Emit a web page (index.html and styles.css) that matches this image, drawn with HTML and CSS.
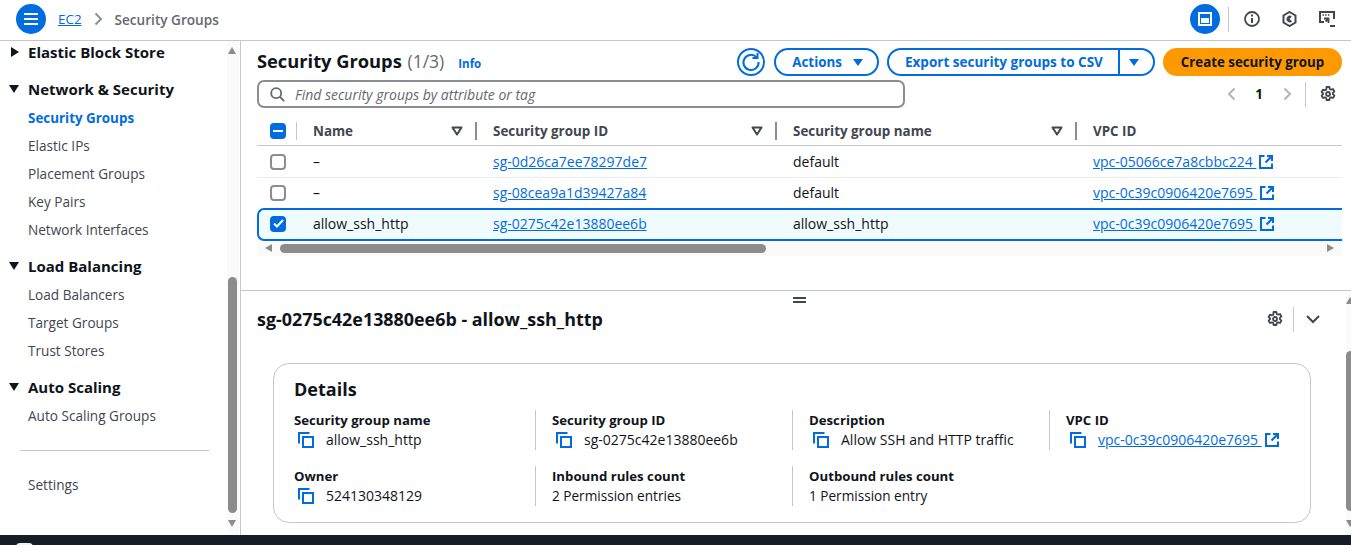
FILE: index.html
```html
<!DOCTYPE html>
<html lang="en">
<head>
    <meta charset="UTF-8">
    <title>Security Groups | EC2</title>
    <link rel="stylesheet" href="styles.css">
</head>
<body>
    <svg class="icon-defs" width="0" height="0">
        <defs>
            <symbol id="copy" viewBox="0 0 16 16">
                <path d="M1 11.5V1h10.5" fill="none" stroke="currentColor" stroke-width="2"/>
                <rect x="5" y="5" width="10" height="10" fill="none" stroke="currentColor" stroke-width="2"/>
            </symbol>
            <symbol id="external" viewBox="0 0 14 14">
                <path d="M5.5 1H1v12h12V8.5" fill="none" stroke="currentColor" stroke-width="2"/>
                <path d="M8 1h5v5M13 1L6.5 7.5" fill="none" stroke="currentColor" stroke-width="2.2"/>
            </symbol>
            <symbol id="gear" viewBox="0 0 16 16">
                <path d="M6.6 1h2.8l.4 2 1.3.7 1.9-.7 1.4 2.4-1.5 1.4v1.4l1.5 1.4-1.4 2.4-1.9-.7-1.3.7-.4 2H6.6l-.4-2-1.3-.7-1.9.7-1.4-2.4 1.5-1.4V7.4L1.6 6l1.4-2.4 1.9.7 1.3-.7z" fill="none" stroke="currentColor" stroke-width="1.8" stroke-linejoin="round"/>
                <circle cx="8" cy="8" r="2" fill="none" stroke="currentColor" stroke-width="1.8"/>
            </symbol>
            <symbol id="sort" viewBox="0 0 12 10">
                <path d="M1.5 1.5h9L6 8.5z" fill="none" stroke="currentColor" stroke-width="2" stroke-linejoin="round"/>
            </symbol>
        </defs>
    </svg>

    <header class="topbar">
        <button class="menu-btn" aria-label="Open navigation">
            <svg width="14" height="12" viewBox="0 0 14 12"><path d="M0 1h14M0 6h14M0 11h14" stroke="#fff" stroke-width="2"/></svg>
        </button>
        <a class="crumb-link" href="#">EC2</a>
        <svg class="crumb-sep" width="9" height="14" viewBox="0 0 9 14"><path d="M1.5 1.5L7 7l-5.5 5.5" fill="none" stroke="#879596" stroke-width="2"/></svg>
        <span class="crumb-current">Security Groups</span>
        <div class="topbar-tools">
            <button class="panel-btn" aria-label="Toggle panel">
                <svg width="14" height="14" viewBox="0 0 14 14"><rect x="1" y="1" width="12" height="12" fill="none" stroke="#fff" stroke-width="2"/><rect x="3" y="6" width="8" height="5" fill="#fff"/></svg>
            </button>
            <span class="tools-sep"></span>
            <svg class="tool" width="16" height="16" viewBox="0 0 16 16"><circle cx="8" cy="8" r="7" fill="none" stroke="#424650" stroke-width="1.8"/><path d="M8 7v5" stroke="#424650" stroke-width="2"/><path d="M8 3.5v2" stroke="#424650" stroke-width="2"/></svg>
            <svg class="tool" width="15" height="16" viewBox="0 0 15 16"><path d="M7.5 1l6 3.5v7l-6 3.5-6-3.5v-7z" fill="none" stroke="#424650" stroke-width="2"/><path d="M10.2 10.4A3.3 3.3 0 1 1 9.8 5.4L7.5 8z" fill="#424650"/></svg>
            <svg class="tool" width="16" height="16" viewBox="0 0 16 16"><path d="M5 11H1V1h14v7" fill="none" stroke="#424650" stroke-width="2"/><path d="M3.5 4h1.5M6.2 4h1.5M8.9 4h1.5" stroke="#424650" stroke-width="1.5"/><path d="M5 7.5h4.5V12M9.5 7.5L6.5 10.5" fill="none" stroke="#424650" stroke-width="1.8"/><path d="M11 15h5" stroke="#424650" stroke-width="2"/></svg>
        </div>
    </header>

    <div class="layout">
        <nav class="sidebar">
            <div class="nav-head nav-first"><span class="caret caret-right"></span>Elastic Block Store</div>
            <div class="nav-head"><span class="caret caret-down"></span>Network &amp; Security</div>
            <a class="nav-item active" href="#">Security Groups</a>
            <a class="nav-item" href="#">Elastic IPs</a>
            <a class="nav-item" href="#">Placement Groups</a>
            <a class="nav-item" href="#">Key Pairs</a>
            <a class="nav-item" href="#">Network Interfaces</a>
            <div class="nav-head"><span class="caret caret-down"></span>Load Balancing</div>
            <a class="nav-item" href="#">Load Balancers</a>
            <a class="nav-item" href="#">Target Groups</a>
            <a class="nav-item" href="#">Trust Stores</a>
            <div class="nav-head"><span class="caret caret-down"></span>Auto Scaling</div>
            <a class="nav-item" href="#">Auto Scaling Groups</a>
            <hr class="nav-divider">
            <a class="nav-item" href="#">Settings</a>
            <div class="scrollbar">
                <span class="arrow-up"></span>
                <span class="thumb nav-thumb"></span>
                <span class="arrow-down"></span>
            </div>
        </nav>

        <main class="content">
            <section class="list-pane">
                <div class="list-head">
                    <h1 class="page-title">Security Groups <span class="count">(1/3)</span></h1>
                    <a class="info" href="#">Info</a>
                    <div class="actions">
                        <button class="refresh" aria-label="Refresh">
                            <svg width="20" height="20" viewBox="0 0 20 20"><path d="M15.5 5.2A7.6 7.6 0 1 0 17.6 10" fill="none" stroke="#006ce0" stroke-width="2"/><path d="M11.5 6h5V1" fill="none" stroke="#006ce0" stroke-width="2"/></svg>
                        </button>
                        <button class="btn actions-btn">Actions <span class="tri"></span></button>
                        <div class="split">
                            <button class="btn split-main">Export security groups to CSV</button>
                            <button class="btn split-drop" aria-label="More"><span class="tri"></span></button>
                        </div>
                        <button class="btn btn-primary">Create security group</button>
                    </div>
                </div>

                <div class="filter-row">
                    <label class="search">
                        <svg width="15" height="15" viewBox="0 0 15 15"><circle cx="6.2" cy="6.2" r="5" fill="none" stroke="#656871" stroke-width="1.8"/><path d="M10 10l4.2 4.2" stroke="#656871" stroke-width="1.8"/></svg>
                        <input type="text" placeholder="Find security groups by attribute or tag">
                    </label>
                    <div class="pager">
                        <svg width="9" height="14" viewBox="0 0 9 14"><path d="M7.5 1.5L2 7l5.5 5.5" fill="none" stroke="#b4b4bb" stroke-width="2"/></svg>
                        <span class="page-num">1</span>
                        <svg width="9" height="14" viewBox="0 0 9 14"><path d="M1.5 1.5L7 7l-5.5 5.5" fill="none" stroke="#b4b4bb" stroke-width="2"/></svg>
                        <span class="pager-sep"></span>
                        <svg class="gear" width="16" height="16"><use href="#gear"/></svg>
                    </div>
                </div>

                <div class="table">
                    <div class="row row-head">
                        <div class="cell cell-check"><span class="check check-on"><svg width="10" height="2" viewBox="0 0 10 2"><path d="M0 1h10" stroke="#fff" stroke-width="2"/></svg></span><span class="col-sep sep-light"></span></div>
                        <div class="cell cell-name">Name<svg class="sort" width="12" height="10"><use href="#sort"/></svg><span class="col-sep"></span></div>
                        <div class="cell cell-id">Security group ID<svg class="sort" width="12" height="10"><use href="#sort"/></svg><span class="col-sep"></span></div>
                        <div class="cell cell-group">Security group name<svg class="sort" width="12" height="10"><use href="#sort"/></svg><span class="col-sep"></span></div>
                        <div class="cell cell-vpc">VPC ID</div>
                    </div>
                    <div class="row row-first">
                        <div class="cell cell-check"><span class="check"></span></div>
                        <div class="cell cell-name">–</div>
                        <div class="cell cell-id"><a href="#">sg-0d26ca7ee78297de7</a></div>
                        <div class="cell cell-group">default</div>
                        <div class="cell cell-vpc"><a href="#">vpc-05066ce7a8cbbc224&nbsp;</a><svg class="ext" width="14" height="14"><use href="#external"/></svg></div>
                    </div>
                    <div class="row row-last">
                        <div class="cell cell-check"><span class="check"></span></div>
                        <div class="cell cell-name">–</div>
                        <div class="cell cell-id"><a href="#">sg-08cea9a1d39427a84</a></div>
                        <div class="cell cell-group">default</div>
                        <div class="cell cell-vpc"><a href="#">vpc-0c39c0906420e7695&nbsp;</a><svg class="ext" width="14" height="14"><use href="#external"/></svg></div>
                    </div>
                    <div class="row row-selected">
                        <div class="cell cell-check"><span class="check check-on"><svg width="11" height="9" viewBox="0 0 11 9"><path d="M1 4.5L4 7.5 10 1" fill="none" stroke="#fff" stroke-width="2"/></svg></span></div>
                        <div class="cell cell-name">allow_ssh_http</div>
                        <div class="cell cell-id"><a href="#">sg-0275c42e13880ee6b</a></div>
                        <div class="cell cell-group">allow_ssh_http</div>
                        <div class="cell cell-vpc"><a href="#">vpc-0c39c0906420e7695&nbsp;</a><svg class="ext" width="14" height="14"><use href="#external"/></svg></div>
                    </div>
                    <div class="hscroll">
                        <span class="arrow-left"></span>
                        <span class="thumb hscroll-thumb"></span>
                        <span class="arrow-right"></span>
                    </div>
                </div>
            </section>

            <section class="detail-pane">
                <span class="drag-handle"></span>
                <div class="detail-head">
                    <h2 class="detail-title">sg-0275c42e13880ee6b - allow_ssh_http</h2>
                    <div class="detail-tools">
                        <svg class="gear" width="16" height="16"><use href="#gear"/></svg>
                        <span class="pager-sep"></span>
                        <svg class="chevron" width="14" height="9" viewBox="0 0 14 9"><path d="M1 1l6 6 6-6" fill="none" stroke="#424650" stroke-width="2"/></svg>
                    </div>
                </div>
                <div class="card">
                    <h3 class="card-title">Details</h3>
                    <div class="fields">
                        <div class="field field-one">
                            <div class="field-label">Security group name</div>
                            <div class="field-value"><svg class="copy" width="16" height="16"><use href="#copy"/></svg>allow_ssh_http</div>
                        </div>
                        <div class="field">
                            <div class="field-label">Security group ID</div>
                            <div class="field-value"><svg class="copy" width="16" height="16"><use href="#copy"/></svg>sg-0275c42e13880ee6b</div>
                        </div>
                        <div class="field">
                            <div class="field-label">Description</div>
                            <div class="field-value"><svg class="copy" width="16" height="16"><use href="#copy"/></svg>Allow SSH and HTTP traffic</div>
                        </div>
                        <div class="field">
                            <div class="field-label">VPC ID</div>
                            <div class="field-value"><svg class="copy" width="16" height="16"><use href="#copy"/></svg><a href="#">vpc-0c39c0906420e7695&nbsp;</a><svg class="ext" width="14" height="14"><use href="#external"/></svg></div>
                        </div>
                        <div class="field field-one">
                            <div class="field-label">Owner</div>
                            <div class="field-value"><svg class="copy" width="16" height="16"><use href="#copy"/></svg>524130348129</div>
                        </div>
                        <div class="field">
                            <div class="field-label">Inbound rules count</div>
                            <div class="field-value field-small">2 Permission entries</div>
                        </div>
                        <div class="field">
                            <div class="field-label">Outbound rules count</div>
                            <div class="field-value field-small">1 Permission entry</div>
                        </div>
                    </div>
                </div>
                <div class="scrollbar scrollbar-detail">
                    <span class="arrow-up"></span>
                    <span class="thumb detail-thumb"></span>
                    <span class="arrow-down"></span>
                </div>
            </section>
        </main>
    </div>

    <footer class="taskbar"><span class="taskbar-item"></span></footer>
</body>
</html>
```

FILE: styles.css
```css
* {
    box-sizing: border-box;
}

html, body {
    margin: 0;
    height: 100%;
}

body {
    font-family: "Open Sans", "Noto Sans", sans-serif;
    font-size: 14px;
    color: #0f141a;
    background: #fff;
    display: flex;
    flex-direction: column;
    overflow: hidden;
}

a {
    color: #006ce0;
}

button {
    font-family: inherit;
    cursor: pointer;
}

.icon-defs {
    position: absolute;
}

/* top bar */
.topbar {
    height: 41px;
    flex: none;
    display: flex;
    align-items: center;
    padding: 0 16px 2px 16px;
    border-bottom: 1px solid #c6c6cd;
}

.menu-btn {
    width: 30px;
    height: 30px;
    border: none;
    border-radius: 50%;
    background: #006ce0;
    display: flex;
    align-items: center;
    justify-content: center;
    padding: 0;
}

.crumb-link {
    margin-left: 12px;
    font-size: 13.4px;
    text-decoration: underline;
}

.crumb-sep {
    margin: 0 12px 0 12px;
}

.crumb-current {
    font-size: 13.6px;
    font-weight: 600;
    color: #656871;
}

.topbar-tools {
    margin-left: auto;
    display: flex;
    align-items: center;
}

.panel-btn {
    width: 30px;
    height: 30px;
    border: none;
    border-radius: 50%;
    background: #006ce0;
    display: flex;
    align-items: center;
    justify-content: center;
    padding: 0;
}

.tools-sep {
    width: 1px;
    height: 25px;
    background: #c6c6cd;
    margin: 0 15px 0 8px;
}

.tool {
    margin-right: 22px;
}

.tool:last-child {
    margin-right: 0;
}

.layout {
    flex: 1;
    min-height: 0;
    display: flex;
}

/* side nav */
.sidebar {
    width: 241px;
    flex: none;
    position: relative;
    border-right: 1px solid #c6c6cd;
    padding: 0 0 0 28px;
    overflow: hidden;
}

.nav-head {
    position: relative;
    height: 20px;
    line-height: 20px;
    margin: 12px 0 5px;
    font-size: 15px;
    font-weight: 700;
    color: #0f141a;
}

.nav-first {
    margin: 1px 0 17px;
}

.caret {
    position: absolute;
    left: -18px;
    top: 5px;
    width: 0;
    height: 0;
}

.caret-right {
    left: -17px;
    border-top: 5px solid transparent;
    border-bottom: 5px solid transparent;
    border-left: 8px solid #0f141a;
}

.caret-down {
    left: -19px;
    top: 6px;
    border-left: 5.5px solid transparent;
    border-right: 5.5px solid transparent;
    border-top: 8px solid #0f141a;
}

.nav-item {
    display: block;
    height: 28px;
    line-height: 28px;
    color: #424650;
    text-decoration: none;
    font-size: 13.6px;
}

.nav-item.active {
    color: #006ce0;
    font-weight: 700;
    font-size: 13.4px;
}

.nav-divider {
    width: 189px;
    margin: 20px 0 20px -8px;
    border: none;
    border-top: 1px solid #c6c6cd;
}

.scrollbar {
    position: absolute;
    right: 1px;
    top: 0;
    bottom: 0;
    width: 12px;
    background: #fafafa;
}

.thumb {
    position: absolute;
    background: #8c8c8c;
    border-radius: 5px;
}

.nav-thumb {
    left: 1px;
    width: 9px;
    top: 236px;
    height: 236px;
}

.arrow-up, .arrow-down {
    position: absolute;
    left: 1px;
    width: 0;
    height: 0;
    border-left: 4.5px solid transparent;
    border-right: 4.5px solid transparent;
}

.arrow-up {
    top: 6px;
    border-bottom: 7px solid #8c8c8c;
}

.arrow-down {
    bottom: 8px;
    border-top: 7px solid #8c8c8c;
}

/* main area */
.content {
    flex: 1;
    min-width: 0;
    display: flex;
    flex-direction: column;
}

.list-pane {
    height: 250px;
    flex: none;
    padding: 0 9px 0 16px;
    border-bottom: 1px solid #c6c6cd;
}

.list-head {
    height: 39px;
    display: flex;
    align-items: center;
    padding-top: 3px;
}

.page-title {
    margin: -4px 0 0;
    font-size: 18.3px;
    font-weight: 700;
    color: #0f141a;
}

.count {
    margin-left: 1px;
    font-size: 17.5px;
    font-weight: 400;
    color: #656871;
}

.info {
    margin-left: 14px;
    margin-top: 2px;
    font-size: 11.5px;
    font-weight: 700;
    text-decoration: none;
}

.actions {
    margin-left: auto;
    display: flex;
    align-items: center;
}

.btn {
    height: 28px;
    border: 2px solid #006ce0;
    border-radius: 14px;
    background: #fff;
    color: #006ce0;
    font-size: 13.4px;
    font-weight: 700;
    padding: 0 16px;
    display: flex;
    align-items: center;
}

.refresh {
    width: 28px;
    height: 28px;
    margin-right: 9px;
    border: 2px solid #006ce0;
    border-radius: 50%;
    background: #fff;
    padding: 0;
    display: flex;
    align-items: center;
    justify-content: center;
}

.actions-btn {
    padding: 0 14px 0 16px;
}

.tri {
    display: inline-block;
    width: 0;
    height: 0;
    margin-left: 11px;
    border-left: 5.5px solid transparent;
    border-right: 5.5px solid transparent;
    border-top: 7px solid #006ce0;
}

.split {
    display: flex;
    margin: 0 8px;
}

.split-main {
    width: 233px;
    font-size: 13.5px;
    border-radius: 14px 0 0 14px;
    white-space: nowrap;
}

.split-drop {
    border-left: none;
    border-radius: 0 14px 14px 0;
    padding: 0 0 0 9px;
    width: 35px;
}

.split-drop .tri {
    margin-left: 0;
}

.btn-primary {
    width: 179px;
    justify-content: center;
    font-size: 13.3px;
    background: #ff9900;
    border-color: #ff9900;
    color: #0f141a;
    padding: 0;
}

.filter-row {
    height: 28px;
    display: flex;
    align-items: center;
}

.search {
    width: 648px;
    height: 28px;
    display: flex;
    align-items: center;
    gap: 10px;
    padding: 0 11px;
    border: 2px solid #8c8c94;
    border-radius: 7px;
}

.search input {
    flex: 1;
    border: none;
    outline: none;
    padding: 0;
    font: italic 14px "Open Sans", sans-serif;
    color: #0f141a;
}

.search input::placeholder {
    color: #656871;
    opacity: 1;
}

.pager {
    margin-left: auto;
    display: flex;
    align-items: center;
    margin-right: 6px;
}

.page-num {
    margin: 0 20px 0 19px;
    font-size: 13.4px;
    font-weight: 700;
}

.pager .pager-sep {
    margin: 0 14px 0 13px;
}

.pager-sep {
    width: 1px;
    height: 25px;
    background: #c6c6cd;
}

.gear {
    color: #424650;
    display: block;
}

/* table */
.table {
    position: relative;
    margin-top: 9px;
}

.row {
    display: flex;
    height: 31px;
    border-bottom: 1px solid #e9ebed;
}

.row-head {
    height: 29px;
    border-bottom: 1px solid #c6c6cd;
    font-size: 13.4px;
    font-weight: 700;
    color: #424650;
}

.row-first {
    height: 32px;
}

.row-last {
    border-bottom: none;
    height: 30px;
    padding-bottom: 1px;
}

.row-selected {
    height: 33px;
    padding-bottom: 2px;
    background: #f0fbff;
    border: 2px solid #006ce0;
    border-right: none;
    border-radius: 7px 0 0 7px;
}

.row-selected .cell-check {
    width: 54px;
    padding-left: 11px;
}

.cell {
    position: relative;
    display: flex;
    align-items: center;
    white-space: nowrap;
}

.cell-check {
    width: 56px;
    padding-left: 13px;
}

.cell-name {
    width: 180px;
}

.cell-id, .cell-group {
    width: 300px;
}

.cell-vpc {
    flex: 1;
}

.sort {
    position: absolute;
    right: 30px;
    top: 9px;
    color: #424650;
}

.col-sep {
    position: absolute;
    right: 16px;
    top: 5px;
    width: 2px;
    height: 18px;
    background: #8c8c94;
}

.sep-light {
    width: 1px;
    right: 16px;
    background: #c6c6cd;
}

.check {
    width: 16px;
    height: 16px;
    border: 2px solid #8c8c94;
    border-radius: 4px;
    display: flex;
    align-items: center;
    justify-content: center;
}

.check-on {
    background: #006ce0;
    border-color: #006ce0;
}

.ext {
    margin-left: 3px;
    color: #006ce0;
}

.hscroll {
    position: relative;
    height: 15px;
    background: #fafafa;
}

.hscroll-thumb {
    left: 23px;
    width: 486px;
    top: 3px;
    height: 9px;
}

.arrow-left, .arrow-right {
    position: absolute;
    top: 3px;
    width: 0;
    height: 0;
    border-top: 4.5px solid transparent;
    border-bottom: 4.5px solid transparent;
}

.arrow-left {
    left: 8px;
    border-right: 7px solid #8c8c8c;
}

.arrow-right {
    right: 8px;
    border-left: 7px solid #8c8c8c;
}

/* detail split panel */
.detail-pane {
    flex: 1;
    min-height: 0;
    position: relative;
    padding: 0 0 0 16px;
    overflow: hidden;
}

.drag-handle {
    position: absolute;
    left: 552px;
    top: 6px;
    width: 13px;
    height: 6px;
    border-top: 2px solid #424650;
    border-bottom: 2px solid #424650;
}

.detail-head {
    height: 56px;
    display: flex;
    align-items: center;
    padding-right: 31px;
}

.detail-title {
    margin: 0;
    font-size: 17.9px;
    font-weight: 700;
}

.detail-tools {
    margin-left: auto;
    display: flex;
    align-items: center;
    gap: 10px;
}

.chevron {
    margin-left: 2px;
}

.card {
    margin: 16px 40px 0 16px;
    height: 160px;
    border: 1px solid #c6c6cd;
    border-radius: 16px;
    padding: 12px 20px 0;
}

.card-title {
    margin: 0 0 8px;
    font-size: 18px;
    font-weight: 700;
    line-height: 26px;
}

.fields {
    display: grid;
    grid-template-columns: 241px 257px 257px 1fr;
    row-gap: 16px;
}

.field {
    height: 40px;
    border-left: 1px solid #c6c6cd;
    padding-left: 16px;
}

.field-one {
    border-left: none;
    padding-left: 0;
}

.field-label {
    font-size: 13.2px;
    font-weight: 700;
    line-height: 20px;
    color: #0f141a;
}

.field-value {
    line-height: 20px;
    color: #0f141a;
    display: flex;
    align-items: center;
    white-space: nowrap;
}

.field-small {
    font-size: 13.6px;
}

.copy {
    margin: 0 12px 0 4px;
    color: #006ce0;
    flex: none;
}

.scrollbar-detail {
    right: 0;
    top: 0;
    width: 5px;
    overflow: hidden;
}

.scrollbar-detail .arrow-up {
    left: 0;
    top: 6px;
}

.scrollbar-detail .arrow-down {
    left: 0;
    bottom: 8px;
}

.detail-thumb {
    left: 0;
    width: 9px;
    top: 60px;
    height: 160px;
}

.taskbar {
    height: 10px;
    flex: none;
    background: #161d26;
    padding: 8px 0 0 16px;
    overflow: hidden;
}

.taskbar-item {
    display: block;
    width: 17px;
    height: 6px;
    background: #f2f3f3;
    border-radius: 4px 4px 0 0;
}
```
